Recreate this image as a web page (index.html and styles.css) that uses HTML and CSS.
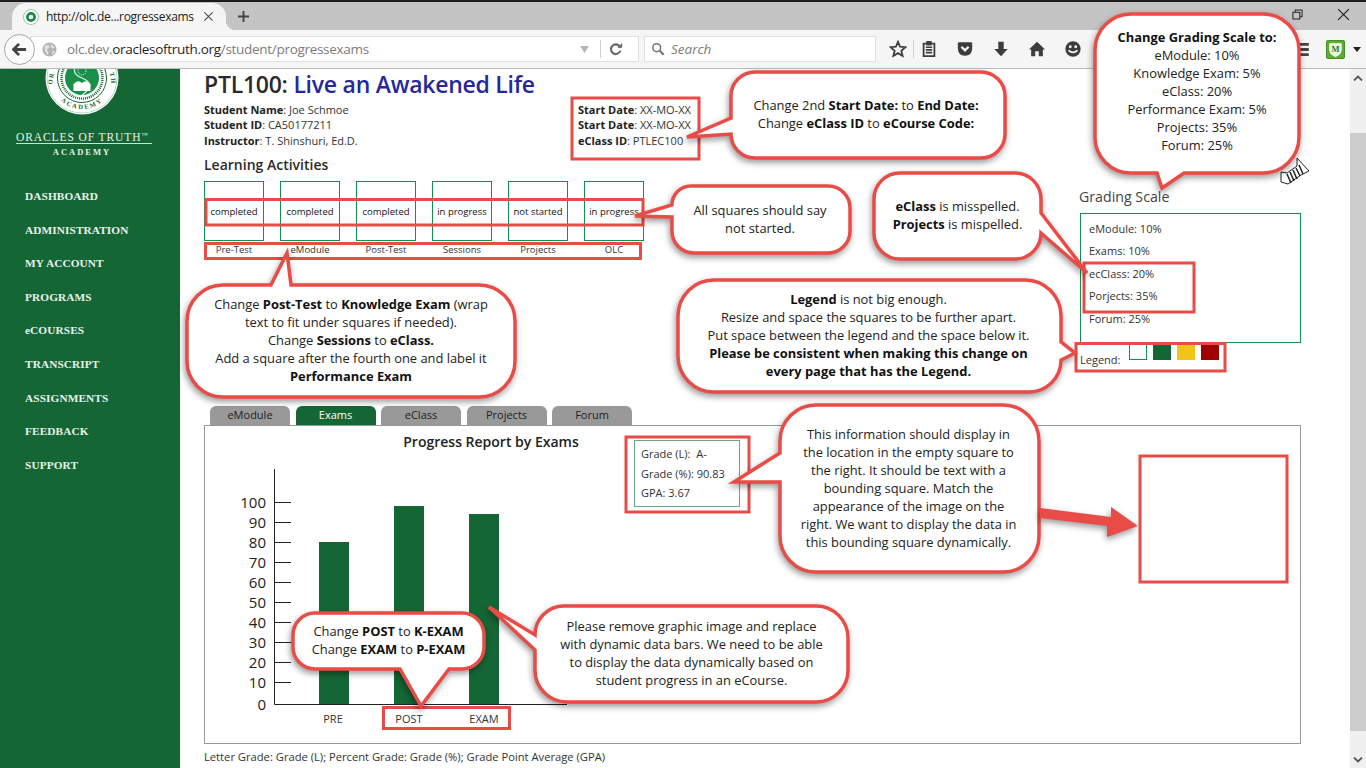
FILE: index.html
```html
<!DOCTYPE html>
<html lang="en">
<head>
<meta charset="utf-8">
<title>Progress Exams</title>
<link rel="stylesheet" href="styles.css">
</head>
<body>
<header class="chrome">
  <div class="topstrip"></div>
  <div class="tabbar">
    <div class="btab">
      <svg class="favicon" viewBox="0 0 16 16"><circle cx="8" cy="8" r="7.5" fill="#fff" stroke="#9cc3a8"/><circle cx="8" cy="8" r="5" fill="#1f8a4c"/><circle cx="8" cy="8" r="2.3" fill="#e9f3ec"/></svg>
      <span class="btab-title">http://olc.de...rogressexams</span>
      <svg class="btab-x" viewBox="0 0 12 12"><path d="M1.5 1.5 10.5 10.5M10.5 1.5 1.5 10.5" stroke="#444" stroke-width="1.1"/></svg>
    </div>
    <svg class="newtab" viewBox="0 0 14 14"><path d="M7 1V13M1 7H13" stroke="#444" stroke-width="2"/></svg>
    <div class="winctl">
      <svg class="restore" viewBox="0 0 12 12"><path d="M3.5 3V1H11V8.5H9M1 3.500H8.500V11H1Z" fill="none" stroke="#222" stroke-width="1.100"/></svg>
      <svg class="winx" viewBox="0 0 12 12"><path d="M1 1 11 11M11 1 1 11" stroke="#222" stroke-width="1.100"/></svg>
    </div>
  </div>
  <div class="toolbar">
    <div class="back"><svg viewBox="0 0 16 16"><path d="M7.500 2 1.500 8 7.500 14M2 8H15" fill="none" stroke="#444" stroke-width="3"/></svg></div>
    <div class="urlbar">
      <svg class="globe" viewBox="0 0 16 16"><circle cx="8" cy="8" r="7.500" fill="#b3b3b3"/><path d="M3 4 7 3 8 6 5 8 7 11 6 14 3 9ZM10 2 14 6 11 7 9 5ZM11 9 14 10 11 14Z" fill="#e2e2e2"/></svg>
      <span class="url"><span class="url-dim">olc.dev.</span><span class="url-host">oraclesoftruth.org</span><span class="url-dim">/student/progressexams</span></span>
      <svg class="url-drop" viewBox="0 0 10 8"><path d="M0 0H10L5 8Z" fill="#b5b5b5"/></svg>
      <span class="url-sep"></span>
      <svg class="reload" viewBox="0 0 16 16"><path d="M13 6.500A5.500 5.500 0 1 0 13 10" fill="none" stroke="#6a6a6a" stroke-width="2.500"/><path d="M9.500 6.500H15V1Z" fill="#6a6a6a"/></svg>
    </div>
    <div class="searchbar">
      <svg class="mag" viewBox="0 0 16 16"><circle cx="6.500" cy="6.500" r="4.500" fill="none" stroke="#777" stroke-width="1.800"/><path d="M10 10 14.500 14.500" stroke="#777" stroke-width="2.400"/></svg>
      <span class="search-text">Search</span>
    </div>
    <div class="tools">
      <svg class="tool" viewBox="0 0 20 20"><path d="M10 2 12.300 7.500 18.200 8 13.700 11.900 15.100 17.700 10 14.600 4.900 17.700 6.300 11.900 1.800 8 7.700 7.500Z" fill="none" stroke="#3d3d3d" stroke-width="2"/></svg>
      <span class="tool-sep"></span>
      <svg class="tool" viewBox="0 0 20 20"><path d="M4 4H16V18H4ZM8 2H12V5H8Z" fill="none" stroke="#3d3d3d" stroke-width="2"/><path d="M6.500 8H13.500M6.500 11H13.500M6.500 14H13.500" stroke="#3d3d3d" stroke-width="1.800"/></svg>
      <svg class="tool" viewBox="0 0 20 20"><path d="M2 4Q2 2.500 3.500 2.500H16.500Q18 2.500 18 4V9Q18 17.500 10 17.500Q2 17.500 2 9Z" fill="#3d3d3d"/><path d="M6 7.500 10 11.500 14 7.500" fill="none" stroke="#f5f5f5" stroke-width="2.600"/></svg>
      <svg class="tool" viewBox="0 0 20 20"><path d="M7 2H13V10H17.500L10 18 2.500 10H7Z" fill="#3d3d3d"/></svg>
      <svg class="tool" viewBox="0 0 20 20"><path d="M10 2 19 10.500H16.500V18H12V12.500H8V18H3.500V10.500H1Z" fill="#3d3d3d"/></svg>
      <svg class="tool" viewBox="0 0 20 20"><circle cx="10" cy="10" r="8.500" fill="#3d3d3d"/><circle cx="7" cy="7.500" r="1.600" fill="#f5f5f5"/><circle cx="13" cy="7.500" r="1.600" fill="#f5f5f5"/><path d="M5 11.500Q10 16 15 11.500" fill="none" stroke="#f5f5f5" stroke-width="2"/></svg>
    </div>
    <svg class="hamburger" viewBox="0 0 20 14"><path d="M0 0H20V3H0ZM0 5.500H20V8.500H0ZM0 11H20V14H0Z" fill="#444"/></svg>
    <svg class="ext" viewBox="0 0 20 20"><rect x=".5" y=".5" width="19" height="19" rx="1.500" fill="#5cae2e" stroke="#3f8a1c"/><path d="M4 4H16V11Q16 15 10 17.500Q4 15 4 11Z" fill="#e8f5df" stroke="#fff"/><text x="10" y="12.500" class="ext-m">M</text></svg>
    <svg class="ext-drop" viewBox="0 0 8 5"><path d="M0 0H8L4 5Z" fill="#222"/></svg>
  </div>
</header>

<div class="page">
  <aside class="sidebar">
    <svg class="seal" viewBox="0 0 80 80">
      <defs>
        <path id="sealBottom" d="M9 40A31 31 0 0 0 71 40"/>
        <path id="sealLeft" d="M11.500 52A29.500 29.500 0 0 1 15 30"/>
        <path id="sealRight" d="M65 30A29.500 29.500 0 0 1 68.500 52"/>
      </defs>
      <circle cx="40" cy="40" r="36.500" fill="#fff"/>
      <circle cx="40" cy="40" r="35" fill="none" stroke="#9cc9ac" stroke-width=".7"/>
      <circle cx="40" cy="40" r="24.500" fill="none" stroke="#156635" stroke-width="1"/>
      <circle cx="40" cy="40" r="20.500" fill="none" stroke="#156635" stroke-width="2.500" stroke-dasharray="1 1"/>
      <circle cx="40" cy="40" r="17" fill="#1a8f4a"/>
      <path d="M40 23C30 30 30 36 40 40C50 44 50 50 40 57" fill="none" stroke="#e6f3ea" stroke-width="1.200"/>
      <path d="M31.500 46Q36 41 40 45Q44 41 48.500 46V53H31.500Z" fill="#fff"/>
      <circle cx="40" cy="33" r="4" fill="none" stroke="#fff" stroke-width="1" stroke-dasharray="1 1"/>
      <text class="seal-text seal-academy"><textPath href="#sealBottom" startOffset="50%">ACADEMY</textPath></text>
      <text class="seal-text"><textPath href="#sealLeft" startOffset="50%">OR</textPath></text>
      <text class="seal-text"><textPath href="#sealRight" startOffset="50%">TH</textPath></text>
    </svg>
    <div class="brand">
      <div class="brand-main">ORACLES OF TRUTH<sup class="brand-tm">™</sup></div>
      <div class="brand-sub">ACADEMY</div>
    </div>
    <nav class="nav">
      <a class="nav-item">DASHBOARD</a>
      <a class="nav-item">ADMINISTRATION</a>
      <a class="nav-item">MY ACCOUNT</a>
      <a class="nav-item">PROGRAMS</a>
      <a class="nav-item">eCOURSES</a>
      <a class="nav-item">TRANSCRIPT</a>
      <a class="nav-item">ASSIGNMENTS</a>
      <a class="nav-item">FEEDBACK</a>
      <a class="nav-item">SUPPORT</a>
    </nav>
  </aside>

  <main class="main">
    <h1 class="title">PTL100: <span class="title-blue">Live an Awakened Life</span></h1>
    <div class="info">
      <div class="info-left">
        <div><b>Student Name</b>: Joe Schmoe</div>
        <div><b>Student ID</b>: CA50177211</div>
        <div><b>Instructor</b>: T. Shinshuri, Ed.D.</div>
      </div>
      <div class="info-right">
        <div><b>Start Date</b>: XX-MO-XX</div>
        <div><b>Start Date</b>: XX-MO-XX</div>
        <div><b>eClass ID</b>: PTLEC100</div>
      </div>
    </div>

    <div class="mid">
      <section class="activities">
        <h2 class="act-title">Learning Activities</h2>
        <div class="squares">
          <div class="square">completed</div>
          <div class="square">completed</div>
          <div class="square">completed</div>
          <div class="square">in progress</div>
          <div class="square">not started</div>
          <div class="square">in progress</div>
        </div>
        <div class="labels">
          <div class="label">Pre-Test</div>
          <div class="label">eModule</div>
          <div class="label">Post-Test</div>
          <div class="label">Sessions</div>
          <div class="label">Projects</div>
          <div class="label">OLC</div>
        </div>
      </section>
      <section class="grading">
        <h2 class="grading-title">Grading Scale</h2>
        <div class="grading-box">
          <div class="grading-row">eModule: 10%</div>
          <div class="grading-row">Exams: 10%</div>
          <div class="grading-row">ecClass: 20%</div>
          <div class="grading-row">Porjects: 35%</div>
          <div class="grading-row">Forum: 25%</div>
        </div>
        <div class="legend">
          <span class="legend-label">Legend:</span>
          <span class="swatch swatch-white"></span>
          <span class="swatch swatch-green"></span>
          <span class="swatch swatch-yellow"></span>
          <span class="swatch swatch-red"></span>
        </div>
      </section>
    </div>

    <div class="tabs">
      <div class="tab">eModule</div>
      <div class="tab tab-active">Exams</div>
      <div class="tab">eClass</div>
      <div class="tab">Projects</div>
      <div class="tab">Forum</div>
    </div>
    <section class="panel">
      <svg class="chart" viewBox="205 426 429 316">
        <text x="491" y="447" class="chart-title">Progress Report by Exams</text>
        <path class="axis" d="M274.500 469V704.500H567"/>
        <path class="axis" d="M274 502.500H291M274 522.500H291M274 542.500H291M274 562.500H291M274 582.500H291M274 602.500H291M274 622.500H291M274 642.500H291M274 662.500H291M274 682.500H291"/>
        <g class="ylab">
          <text x="266" y="508">100</text><text x="266" y="528">90</text><text x="266" y="548">80</text><text x="266" y="568">70</text><text x="266" y="588">60</text><text x="266" y="608">50</text><text x="266" y="628">40</text><text x="266" y="648">30</text><text x="266" y="668">20</text><text x="266" y="688">10</text><text x="266" y="710">0</text>
        </g>
        <rect class="bar" x="319" y="542" width="30" height="162"/>
        <rect class="bar" x="394" y="506" width="30" height="198"/>
        <rect class="bar" x="469" y="514" width="30" height="190"/>
        <g class="xlab">
          <text x="333" y="723">PRE</text><text x="409" y="723">POST</text><text x="484" y="723">EXAM</text>
        </g>
      </svg>
      <div class="gradebox">
        <div>Grade (L):&nbsp; A-</div>
        <div>Grade (%): 90.83</div>
        <div>GPA: 3.67</div>
      </div>
    </section>
    <p class="footnote">Letter Grade: Grade (L); Percent Grade: Grade (%); Grade Point Average (GPA)</p>
  </main>

  <div class="scrollbar">
    <div class="sb-btn"><svg viewBox="0 0 10 6"><path d="M1 5.500 5 1.500 9 5.500" fill="none" stroke="#555" stroke-width="1.800"/></svg></div>
    <div class="sb-gap"></div>
    <div class="sb-thumb"></div>
    <div class="sb-gap2"></div>
    <div class="sb-btn"><svg viewBox="0 0 10 6"><path d="M1 .5 5 4.500 9 .5" fill="none" stroke="#555" stroke-width="1.800"/></svg></div>
  </div>
</div>

<div class="annot">
  <svg class="annot-svg" viewBox="0 0 1366 768">
    <g class="cursor">
      <path d="M1297 158 1309 171 1301 175 1288 184 1281 182 1281 172 1287 173 1297 166Z" fill="#fff" stroke="#222"/>
      <path d="M1287 174 1291 183M1290 172 1294 181M1293 170 1297 179M1296 168 1300 176M1299 165 1303 174" stroke="#222" stroke-width="1.500"/>
    </g>
    <g class="boxes">
      <rect x="572" y="98" width="127" height="61"/>
      <rect x="206" y="199.500" width="437" height="25.500"/>
      <rect x="205.500" y="243.500" width="435" height="15"/>
      <rect x="1084" y="263" width="110" height="49"/>
      <rect x="1076" y="343.500" width="149" height="27.500"/>
      <rect x="626" y="437" width="123" height="75"/>
      <rect x="383.500" y="707.500" width="126" height="21"/>
      <rect x="1140" y="456" width="147" height="126"/>
    </g>
    <g class="bubbles">
      <path d="M1131 14H1263A36 36 0 0 1 1299 50V137A36 36 0 0 1 1263 173H1184L1162 188 1157 173H1131A36 36 0 0 1 1095 137V50A36 36 0 0 1 1131 14Z"/>
      <path d="M755 72H981A24 24 0 0 1 1005 96V134A24 24 0 0 1 981 158H755A24 24 0 0 1 731 134L687 137 731 118V96A24 24 0 0 1 755 72Z"/>
      <path d="M691 186H828A22 22 0 0 1 850 208V231A22 22 0 0 1 828 253H694A22 22 0 0 1 672 231V217L635 216 672 205A19 19 0 0 1 691 186Z"/>
      <path d="M900 173H1015A26 26 0 0 1 1041 199V213L1087 273 1041 233A26 26 0 0 1 1015 259H900A26 26 0 0 1 874 233V199A26 26 0 0 1 900 173Z"/>
      <path d="M223 285H271L287 253 291 285H479A36 36 0 0 1 515 321V361A36 36 0 0 1 479 397H223A36 36 0 0 1 187 361V321A36 36 0 0 1 223 285Z"/>
      <path d="M714 280H1025A36 36 0 0 1 1061 316V342L1075 353 1061 360A32 32 0 0 1 1029 392H714A36 36 0 0 1 678 356V316A36 36 0 0 1 714 280Z"/>
      <path d="M816 405H1003A36 36 0 0 1 1039 441V536A36 36 0 0 1 1003 572H816A36 36 0 0 1 780 536V482H734L780 453V441A36 36 0 0 1 816 405Z"/>
      <path d="M564 606H816A32 32 0 0 1 848 638V670A32 32 0 0 1 816 702H567A32 32 0 0 1 535 670V650L489 607 535 635A29 29 0 0 1 564 606Z"/>
      <path d="M315 613H462A22 22 0 0 1 484 635V647A22 22 0 0 1 462 669H449L421 706 400 669H315A22 22 0 0 1 293 647V635A22 22 0 0 1 315 613Z"/>
      <path class="arrow" d="M1040 508 1111 517V507L1138 526 1107 537V526L1040 518Z"/>
    </g>
  </svg>
  <div class="note note-scale"><div><b>Change Grading Scale to:</b><br>eModule: 10%<br>Knowledge Exam: 5%<br>eClass: 20%<br>Performance Exam: 5%<br>Projects: 35%<br>Forum: 25%</div></div>
  <div class="note note-dates"><div>Change 2nd <b>Start Date:</b> to <b>End Date:</b><br>Change <b>eClass ID</b> to <b>eCourse Code:</b></div></div>
  <div class="note note-squares"><div>All squares should say<br>not started.</div></div>
  <div class="note note-spell"><div><b>eClass</b> is misspelled.<br><b>Projects</b> is mispelled.</div></div>
  <div class="note note-post"><div>Change <b>Post-Test</b> to <b>Knowledge Exam</b> (wrap<br>text to fit under squares if needed).<br>Change <b>Sessions</b> to <b>eClass.</b><br>Add a square after the fourth one and label it<br><b>Performance Exam</b></div></div>
  <div class="note note-legend"><div><b>Legend</b> is not big enough.<br>Resize and space the squares to be further apart.<br>Put space between the legend and the space below it.<br><b>Please be consistent when making this change on<br>every page that has the Legend.</b></div></div>
  <div class="note note-info"><div>This information should display in<br>the location in the empty square to<br>the right. It should be text with a<br>bounding square. Match the<br>appearance of the image on the<br>right. We want to display the data in<br>this bounding square dynamically.</div></div>
  <div class="note note-remove"><div>Please remove graphic image and replace<br>with dynamic data bars. We need to be able<br>to display the data dynamically based on<br>student progress in an eCourse.</div></div>
  <div class="note note-exam"><div>Change <b>POST</b> to <b>K-EXAM</b><br>Change <b>EXAM</b> to <b>P-EXAM</b></div></div>
</div>
</body>
</html>
```
FILE: styles.css
```css
* { box-sizing: border-box; }
html, body { margin: 0; padding: 0; height: 768px; overflow: hidden; background: #fff; }
body { font-family: "Open Sans", sans-serif; color: #222; position: relative; }

/* browser chrome */
.chrome { height: 69px; display: flex; flex-direction: column; }
.topstrip { height: 2px; background: #1c1c1c; flex: none; }
.tabbar { height: 28px; flex: none; background: #c4c4c4; display: flex; align-items: stretch; padding-left: 12px; }
.btab { width: 214px; margin-top: 1px; background: #f5f5f5; border-radius: 14px 14px 0 0; display: flex; align-items: center; padding-left: 11px; position: relative; }
.btab::after { content: ""; position: absolute; right: -10px; bottom: 0; width: 10px; height: 10px; background: radial-gradient(circle at 100% 0, transparent 10px, #f5f5f5 10.500px); }
.favicon { width: 16px; height: 16px; flex: none; }
.btab-title { font-size: 12px; margin-left: 7px; color: #222; white-space: nowrap; width: 154px; letter-spacing: -.3px; }
.btab-x { width: 11px; height: 11px; margin-left: 3px; flex: none; }
.newtab { width: 13px; height: 13px; margin: 8px 0 0 11px; }
.winctl { margin-left: auto; display: flex; align-items: center; gap: 34px; padding-right: 16px; padding-bottom: 4px; }
.restore { width: 11px; height: 11px; }
.winx { width: 13px; height: 13px; }
.toolbar { height: 39px; flex: none; background: #f5f5f5; border-bottom: 1px solid #bcbcbc; display: flex; align-items: center; padding-left: 4px; position: relative; }
.back { width: 31px; height: 31px; border-radius: 50%; background: #fbfbfb; border: 1px solid #a8a8a8; display: flex; align-items: center; justify-content: center; flex: none; position: relative; z-index: 1; margin-top: 1px; }
.back svg { width: 15px; height: 15px; }
.urlbar { width: 609px; height: 26px; margin-left: -5px; background: #fff; border: 1px solid #e0e0e0; display: flex; align-items: center; padding-left: 11px; flex: none; }
.globe { width: 15px; height: 15px; flex: none; }
.url { font-size: 13.500px; margin-left: 10px; white-space: nowrap; width: 513px; letter-spacing: -.3px; }
.url-dim { color: #7c7c7c; }
.url-host { color: #1e1e1e; }
.url-drop { width: 9px; height: 7px; flex: none; }
.url-sep { width: 1px; height: 18px; background: #cfcfcf; margin-left: 11px; flex: none; }
.reload { width: 14px; height: 14px; margin-left: 8px; flex: none; }
.searchbar { width: 232px; height: 26px; margin-left: 5px; background: #fff; border: 1px solid #e0e0e0; display: flex; align-items: center; padding-left: 6px; flex: none; }
.mag { width: 14px; height: 14px; flex: none; }
.search-text { font-style: italic; font-size: 13.500px; color: #7c7c7c; margin-left: 6px; }
.tools { display: flex; align-items: center; margin-left: 13px; gap: 18px; flex: none; }
.tool { width: 18px; height: 18px; flex: none; }
.tool-sep { width: 1px; height: 18px; background: #d0d0d0; margin: 0 -12px; }
.hamburger { width: 21px; height: 13px; flex: none; margin-left: 207px; }
.ext { width: 19px; height: 19px; margin-left: 16px; flex: none; }
.ext-m { font: bold 9px "Liberation Serif", serif; fill: #2f7d12; text-anchor: middle; }
.ext-drop { width: 8px; height: 5px; margin-left: 8px; flex: none; }

/* page */
.page { height: 699px; display: flex; }
.sidebar { width: 180px; flex: none; background: #156635; overflow: hidden; }
.seal { display: block; width: 80px; height: 80px; margin: -31px 0 0 42px; }
.seal-text { font: bold 6.500px "Liberation Serif", serif; fill: #156635; text-anchor: middle; letter-spacing: 1px; }
.seal-academy { letter-spacing: 1.800px; }
.brand { margin-top: 13px; color: #e8f1eb; font-family: "Liberation Serif", serif; text-align: center; width: 165px; }
.brand-main { width: 136px; margin-left: 16px; font-size: 11.500px; letter-spacing: .9px; border-bottom: 1px solid #cfe0d5; white-space: nowrap; line-height: 12px; text-align: left; }
.brand-tm { font-size: 6px; vertical-align: top; line-height: 8px; letter-spacing: 0; }
.brand-sub { margin: 2px 0 0 -1px; font-size: 8.500px; font-weight: bold; letter-spacing: 2px; line-height: 12px; }
.nav { margin-top: 22px; padding-left: 25px; display: flex; flex-direction: column; }
.nav-item { font: bold 11.300px/33.600px "Liberation Serif", serif; color: #e8f1eb; letter-spacing: .1px; }

.main { width: 1170px; flex: none; padding: 1px 49px 0 24px; display: flex; flex-direction: column; }
.title { margin: 0; font-size: 23px; line-height: 28px; font-weight: 600; color: #2b2b2b; letter-spacing: -.25px; }
.title-blue { color: #27279b; }
.info { display: flex; padding-top: 3.500px; margin-bottom: 7px; font-size: 11px; line-height: 15.500px; color: #333; }
.info b { font-weight: 700; color: #222; }
.info-left { width: 374px; }
.mid { height: 251px; display: flex; justify-content: space-between; }
.act-title { margin: 0 0 6px; font-size: 14px; line-height: 20px; font-weight: 600; color: #2b2b2b; }
.squares, .labels { display: flex; gap: 16px; }
.square { width: 60px; height: 60px; border: 1px solid #0f9150; display: flex; align-items: center; justify-content: center; font-size: 9.500px; color: #111; white-space: nowrap; }
.label { width: 60px; text-align: center; font-size: 9.500px; line-height: 18px; color: #333; }
.grading { width: 221px; padding-top: 32px; }
.grading-title { margin: 0 0 6px -1px; font-size: 14.200px; line-height: 20px; font-weight: 400; color: #444; }
.grading-box { height: 130px; border: 1px solid #0f9150; padding: 4px 8px; }
.grading-row { font-size: 11px; line-height: 22.400px; color: #333; }
.legend { display: flex; gap: 6px; height: 18px; margin-top: 1px; }
.legend-label { font-size: 11px; line-height: 15px; margin-top: 8px; width: 43px; color: #333; }
.swatch { width: 18px; height: 16px; }
.swatch-white { border: 1px solid #0f9150; background: #fff; }
.swatch-green { background: #156635; }
.swatch-yellow { background: #f0c419; }
.swatch-red { background: #a00000; }

.tabs { height: 19px; display: flex; gap: 5.500px; padding-left: 6px; }
.tab { width: 80px; background: #999; border-radius: 6px 6px 0 0; font-size: 11px; line-height: 18px; text-align: center; color: #222; }
.tab-active { background: #156635; color: #fff; }
.panel { height: 319px; border: 1px solid #999; display: flex; }
.chart { width: 429px; height: 316px; flex: none; display: block; }
.chart-title { font-size: 14px; font-weight: 600; text-anchor: middle; fill: #222; }
.axis { fill: none; stroke: #222; stroke-width: 1; }
.ylab text { font-size: 15px; text-anchor: end; fill: #222; }
.xlab text { font-size: 11px; text-anchor: middle; fill: #333; }
.bar { fill: #156635; }
.gradebox { width: 106px; height: 67px; margin-top: 14px; border: 1.500px solid #6aa884; padding: 3px 6px; font-size: 11px; line-height: 19.500px; color: #333; white-space: nowrap; }
.footnote { margin: 5px 0 0; font-size: 11.200px; line-height: 16px; color: #333; white-space: nowrap; }

.scrollbar { width: 16px; flex: none; background: #f0f0f0; display: flex; flex-direction: column; }
.sb-btn { height: 17px; flex: none; display: flex; align-items: center; justify-content: center; }
.sb-btn svg { width: 10px; height: 6px; }
.sb-gap { height: 47px; flex: none; }
.sb-thumb { height: 598px; flex: none; background: #cdcdcd; }
.sb-gap2 { height: 20px; flex: none; }

/* review annotations that lie over the page */
.annot { position: absolute; inset: 0; pointer-events: none; }
.annot-svg { position: absolute; left: 0; top: 0; width: 1366px; height: 768px; }
.boxes rect { fill: none; stroke: #e94b47; stroke-width: 3; }
.bubbles path { fill: #fff; stroke: #e94b47; stroke-width: 3.500; stroke-linejoin: miter; filter: drop-shadow(-1px 3px 3px rgba(0,0,0,.4)); }
.bubbles .arrow { fill: #e94b47; stroke: none; }
.note { position: absolute; display: flex; align-items: center; justify-content: center; text-align: center; font-size: 12.900px; line-height: 18px; color: #222; white-space: nowrap; }
.note b { color: #111; }
.note-scale { left: 1095px; top: 11px; width: 204px; height: 159px; }
.note-dates { left: 729px; top: 71px; width: 274px; height: 86px; }
.note-squares { left: 671px; top: 185px; width: 178px; height: 67px; }
.note-spell { left: 874px; top: 172px; width: 167px; height: 86px; }
.note-post { left: 187px; top: 284px; width: 328px; height: 112px; }
.note-legend { left: 677px; top: 279px; width: 383px; height: 112px; }
.note-info { left: 779px; top: 404px; width: 259px; height: 167px; }
.note-remove { left: 535px; top: 605px; width: 313px; height: 96px; }
.note-exam { left: 293px; top: 612px; width: 191px; height: 56px; }
```
